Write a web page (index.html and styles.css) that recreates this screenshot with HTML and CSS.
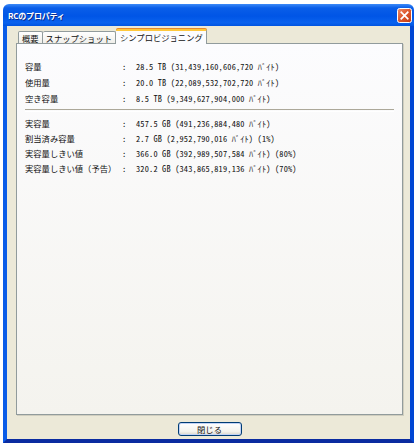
FILE: index.html
```html
<!DOCTYPE html>
<html lang="ja">
<head>
    <meta charset="UTF-8">
    <meta name="viewport" content="width=device-width, initial-scale=1.0">
    <title>RCのプロパティ</title>
    <link rel="stylesheet" href="styles.css">
</head>
<body>
    <div class="window">
        <div class="titlebar">
            <span class="title">RCのプロパティ</span>
            <button class="close" type="button">
                <svg width="15" height="15" viewBox="0 0 15 15">
                    <defs>
                        <linearGradient id="closeGrad" x1="0" y1="0" x2="1" y2="1">
                            <stop offset="0" stop-color="#f0906a"/>
                            <stop offset="0.45" stop-color="#de5a2f"/>
                            <stop offset="1" stop-color="#c23a12"/>
                        </linearGradient>
                    </defs>
                    <rect x="0.5" y="0.5" width="14" height="14" rx="2" fill="url(#closeGrad)" stroke="#fff"/>
                    <path d="M4.3 4.3 L10.7 10.7 M10.7 4.3 L4.3 10.7" stroke="#fff" stroke-width="1.7" stroke-linecap="square"/>
                </svg>
            </button>
        </div>
        <div class="frame">
            <div class="client">
                <div class="tabs">
                    <div class="tab">概要</div>
                    <div class="tab">スナップショット</div>
                    <div class="tab active">シンプロビジョニング</div>
                </div>
                <div class="panel">
                    <div class="props">
                        <span class="label">容量</span><span class="colon">:</span><span class="value">28.5 TB (31,439,160,606,720 ﾊﾞｲﾄ)</span>
                        <span class="label">使用量</span><span class="colon">:</span><span class="value">20.0 TB (22,089,532,702,720 ﾊﾞｲﾄ)</span>
                        <span class="label">空き容量</span><span class="colon">:</span><span class="value">8.5 TB (9,349,627,904,000 ﾊﾞｲﾄ)</span>
                    </div>
                    <div class="sep"></div>
                    <div class="props tight">
                        <span class="label">実容量</span><span class="colon">:</span><span class="value">457.5 GB (491,236,884,480 ﾊﾞｲﾄ)</span>
                        <span class="label">割当済み容量</span><span class="colon">:</span><span class="value">2.7 GB (2,952,790,016 ﾊﾞｲﾄ) (1%)</span>
                        <span class="label">実容量しきい値</span><span class="colon">:</span><span class="value">366.0 GB (392,989,507,584 ﾊﾞｲﾄ) (80%)</span>
                        <span class="label">実容量しきい値（予告）</span><span class="colon">:</span><span class="value">320.2 GB (343,865,819,136 ﾊﾞｲﾄ) (70%)</span>
                    </div>
                </div>
                <div class="actions">
                    <button class="btn" type="button">閉じる</button>
                </div>
            </div>
        </div>
    </div>
</body>
</html>
```

FILE: styles.css
```css
html, body {
    margin: 0;
    padding: 0;
    background: #fff;
}
body {
    font-family: "Noto Sans CJK JP", sans-serif;
    font-size: 8.3px;
    color: #111;
}
.window {
    width: 411px;
    height: 439px;
    margin: 4px 0 0 3px;
    display: flex;
    flex-direction: column;
}
.titlebar {
    height: 22px;
    flex: none;
    display: flex;
    align-items: center;
    justify-content: space-between;
    padding: 0 2px 0 5px;
    border-radius: 6px 6px 0 0;
    background: linear-gradient(#3d8af7 0%, #0a5ee8 18%, #0055e6 55%, #0a62ee 85%, #0054e0 100%);
    box-sizing: border-box;
}
.title {
    color: #fff;
    font-size: 8px;
    font-weight: bold;
    letter-spacing: -0.2px;
    text-shadow: 1px 1px 0 #0a2a8a;
}
.close {
    width: 15px;
    height: 15px;
    padding: 0;
    border: 0;
    background: none;
    display: block;
}
.close svg {
    display: block;
}
.frame {
    flex: 1;
    display: flex;
    border-style: solid;
    border-width: 0 4px 4px;
    border-color: #0058ee #0046d4 #0a2ba0 #0a5ce8;
}
.client {
    flex: 1;
    display: flex;
    flex-direction: column;
    background: #ece9d8;
    padding: 3px 7px 0 9px;
}

/* tab strip */
.tabs {
    height: 14px;
    flex: none;
    display: flex;
    align-items: flex-end;
    padding-left: 2px;
}
.tab {
    height: 12px;
    line-height: 12px;
    padding: 0 3px;
    border: 1px solid #919b9c;
    border-bottom: 0;
    border-left-width: 0;
    border-radius: 2px 2px 0 0;
    background: linear-gradient(#fff, #f0efea);
    white-space: nowrap;
    box-sizing: border-box;
}
.tab:first-child {
    border-left-width: 1px;
}
.tab.active {
    height: 15px;
    line-height: 13px;
    margin-bottom: -1px;
    padding: 0 3px 0 4px;
    border-top: 2px solid #ffc83c;
    border-left: 0;
    background: #fcfcfe;
    box-shadow: 0 -1px 0 #e68b2c;
    position: relative;
    z-index: 1;
}

/* page body of the selected tab */
.panel {
    flex: 1;
    border: 1px solid #919b9c;
    background: linear-gradient(#fcfcfe, #f4f3ee);
    box-shadow: 1px 1px 0 #d0cebf;
    padding: 14px 8px 0 8px;
}
.props {
    display: grid;
    grid-template-columns: 98px 13px 1fr;
    line-height: 16px;
}
.props.tight {
    line-height: 15px;
}
.label {
    white-space: nowrap;
}
.value {
    white-space: nowrap;
    font-feature-settings: "hwid";
    letter-spacing: 0.2px;
}
.sep {
    height: 1px;
    margin: 3px 0 4px;
    border-top: 1px solid #aca899;
    border-bottom: 1px solid #fff;
}

.actions {
    height: 24px;
    flex: none;
    display: flex;
    justify-content: center;
    padding-top: 7px;
    box-sizing: border-box;
}
.btn {
    width: 64px;
    height: 14px;
    padding: 0;
    font-family: inherit;
    font-size: 8.3px;
    line-height: 12px;
    color: #111;
    border: 1px solid #003c74;
    border-radius: 3px;
    background: linear-gradient(#fff, #f4f3ee 70%, #d8d5c8);
    box-shadow: inset 0 0 0 1px #c2d3f6;
}
```
